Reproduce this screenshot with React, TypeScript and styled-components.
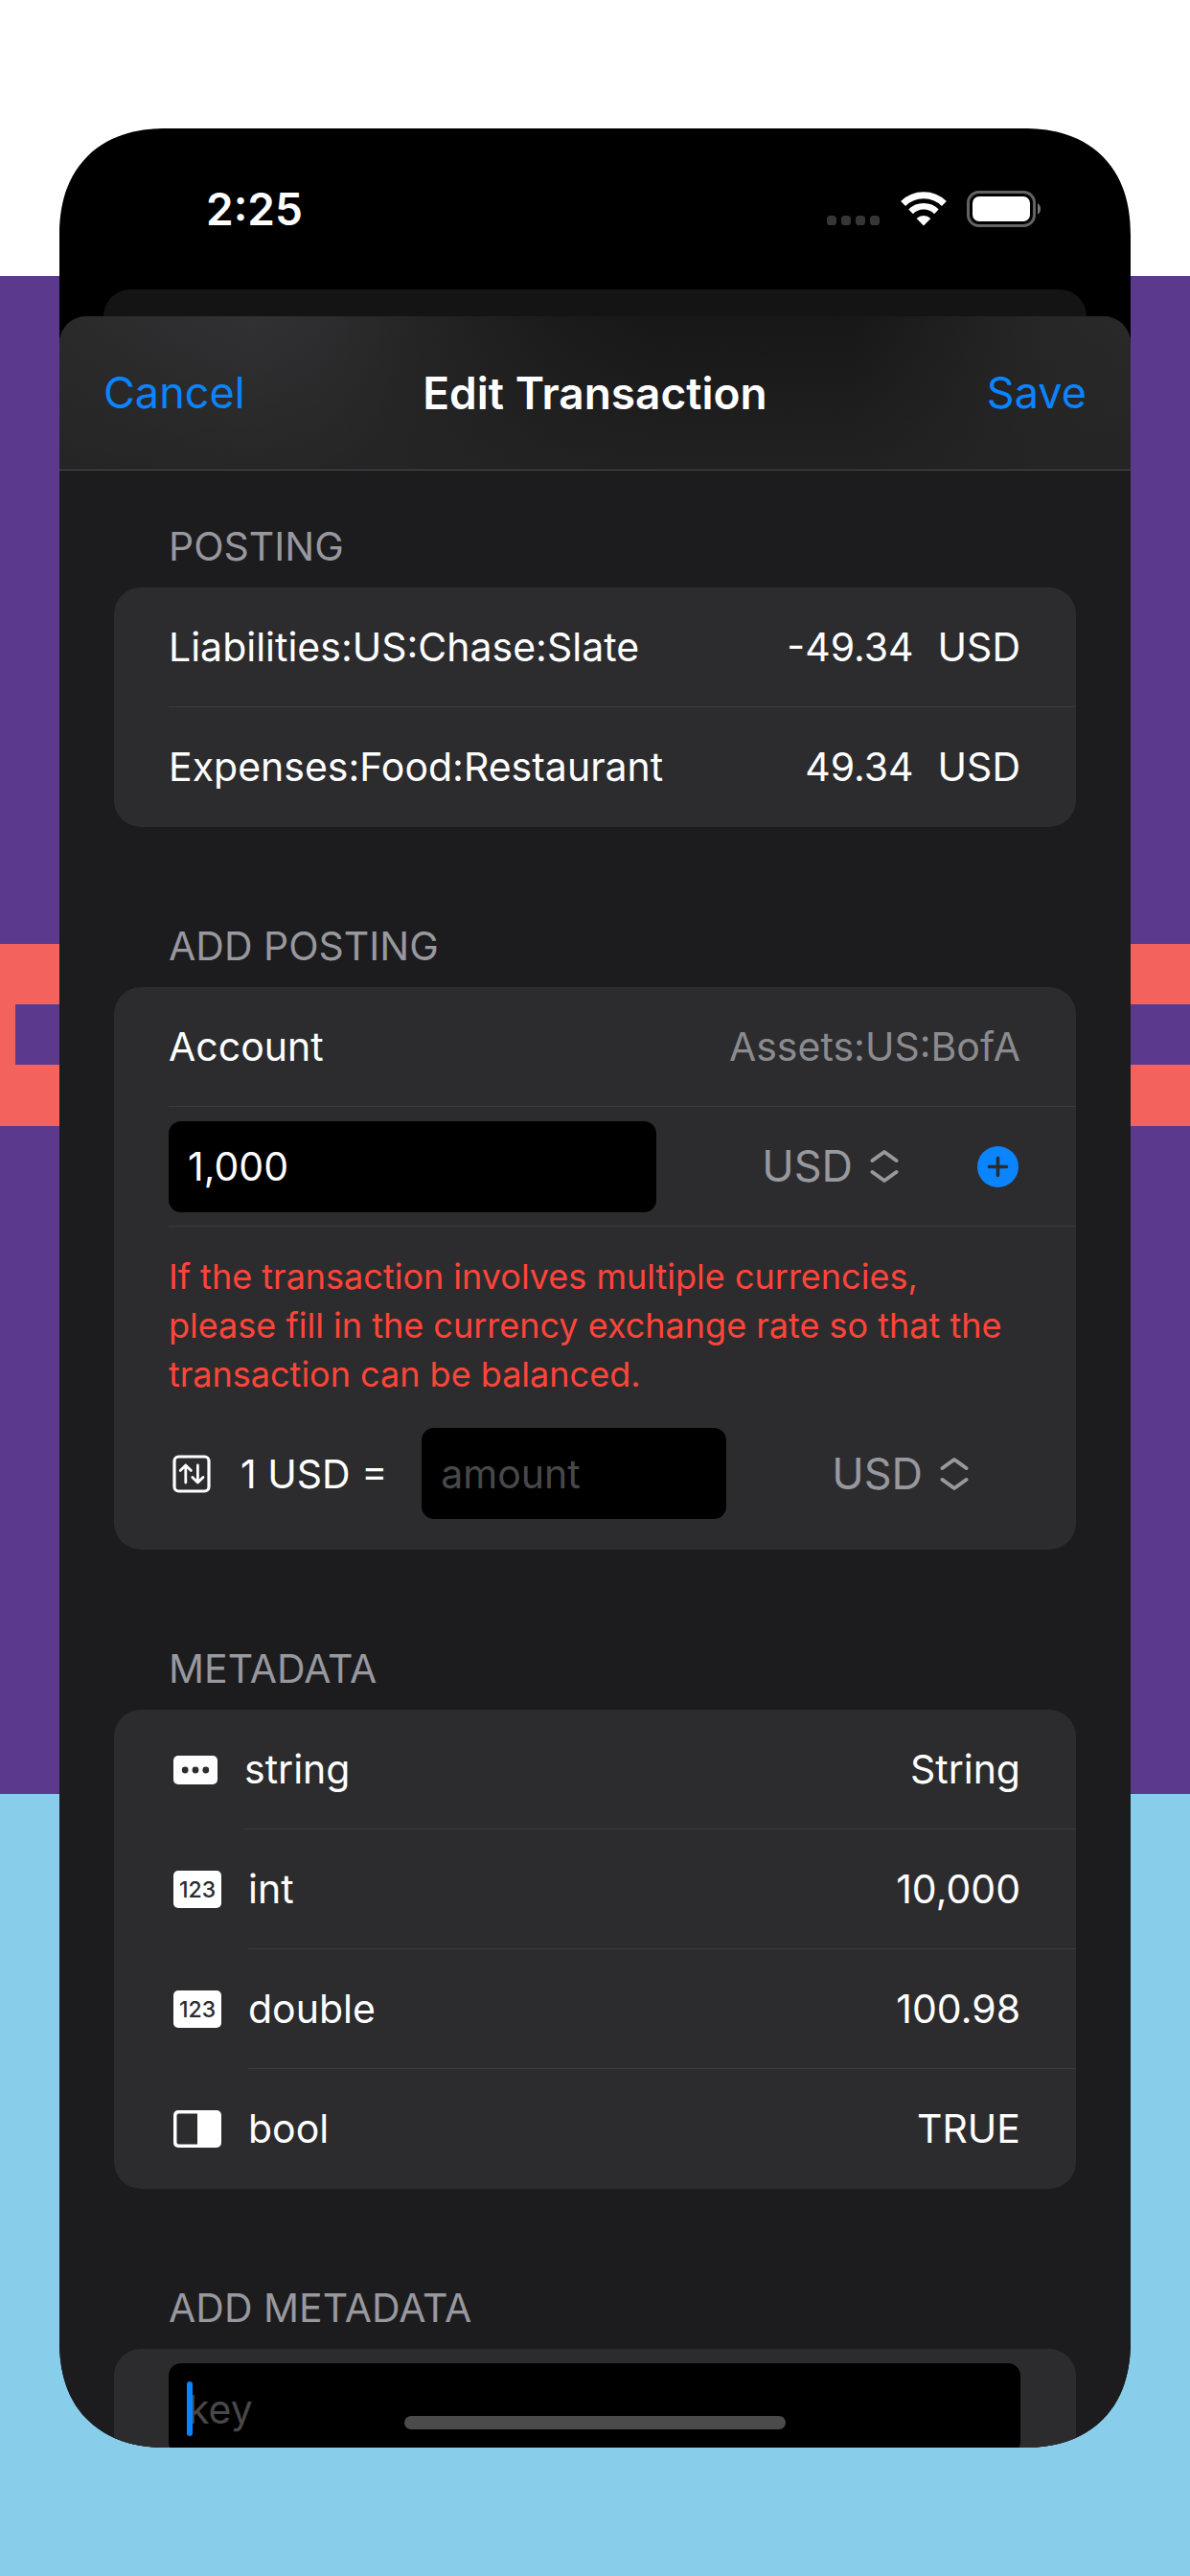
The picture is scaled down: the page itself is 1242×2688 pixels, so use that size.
import React, { useState } from "react";
import styled, { createGlobalStyle } from "styled-components";

const color = {
  purple: "#5b3a8e",
  coral: "#f3625d",
  sky: "#88cdea",
  sheet: "#1c1c1e",
  card: "#2c2c2e",
  line: "#3c3c3e",
  muted: "#98989f",
  hint: "#48484a",
  blue: "#0a84ff",
  red: "#ff453a",
};

const GlobalStyle = createGlobalStyle`
  *, *::before, *::after { box-sizing: border-box; }
  body { margin: 0; }
  body, button, input, select {
    font-family: Inter, "Liberation Sans", sans-serif;
    font-size: 41px;
    line-height: 52px;
    color: #fff;
  }
  button, input, select {
    border: 0;
    padding: 0;
    margin: 0;
    background: none;
    outline: none;
  }
  svg { display: block; flex: none; }
`;

const Page = styled.div`
  height: 100vh;
  min-height: 1200px;
  padding: 134px 62px;
  display: flex;
  background:
    linear-gradient(${color.coral}, ${color.coral}) 0 985px / 16px 190px no-repeat,
    linear-gradient(
      #fff 288px,
      ${color.purple} 288px 985px,
      ${color.coral} 985px 1048px,
      ${color.purple} 1048px 1111px,
      ${color.coral} 1111px 1175px,
      ${color.purple} 1175px 1872px,
      ${color.sky} 1872px
    );
`;

const Phone = styled.div`
  position: relative;
  flex: 1;
  min-width: 0;
  display: flex;
  flex-direction: column;
  overflow: hidden;
  border-radius: 112px;
  corner-shape: superellipse(1.2);
  background: #000;
`;

const StatusBar = styled.div`
  flex: none;
  height: 168px;
  padding: 0 93px 0 153px;
  display: flex;
  align-items: center;
  justify-content: space-between;
  font-size: 46px;
  font-weight: 600;
`;

const StatusIcons = styled.div`
  display: flex;
  align-items: center;
  gap: 21px;
`;

const SheetBehind = styled.div`
  flex: none;
  height: 28px;
  margin: 0 46px;
  border-radius: 28px 28px 0 0;
  background: #141414;
`;

const Sheet = styled.form`
  flex: 1;
  min-height: 0;
  display: flex;
  flex-direction: column;
  overflow: hidden;
  border-radius: 28px 28px 0 0;
  background: ${color.sheet};
`;

const NavBar = styled.header`
  flex: none;
  height: 161px;
  padding: 0 46px;
  display: grid;
  grid-template-columns: 1fr auto 1fr;
  align-items: center;
  border-bottom: 1px solid #4c4c4e;
  background:
    linear-gradient(transparent, rgba(36, 36, 36, 0.8)),
    linear-gradient(90deg, #2a2a2b, #313133 18%, #2e2e30 24%, #242424 34%, #1b1b1b 46%, #171717 56%, #171717 74%, #272727 92%, #292929);
`;

const Title = styled.h1`
  margin: 0;
  font-size: 46px;
  font-weight: 600;
`;

const NavButton = styled.button<{ $end?: boolean }>`
  justify-self: ${(p) => (p.$end ? "end" : "start")};
  font-size: 45px;
  color: ${color.blue};
`;

const Content = styled.main`
  flex: 1;
  min-height: 0;
  padding: 53px 57px 0;
  display: flex;
  flex-direction: column;
  gap: 98px;
  overflow: hidden;
`;

const Section = styled.section`
  flex: none;
`;

const SectionTitle = styled.h2`
  margin: 0;
  padding: 0 57px 17px;
  font-size: 41px;
  font-weight: 400;
  text-transform: uppercase;
  color: ${color.muted};
`;

const Card = styled.ul`
  margin: 0;
  padding: 0 0 0 57px;
  list-style: none;
  border-radius: 28px;
  background: ${color.card};
`;

const Row = styled.li`
  display: flex;
  align-items: center;
`;

const RowBody = styled.div`
  flex: 1;
  min-width: 0;
  height: 125px;
  padding-right: 58px;
  display: flex;
  align-items: center;
  justify-content: space-between;
  border-bottom: 1px solid ${color.line};

  ${Row}:last-child > & {
    border-bottom-color: transparent;
  }
`;

const Amount = styled.span`
  display: flex;
  gap: 25px;
`;

const IconSlot = styled.span`
  padding: 0 28px 0 5px;
`;

const AccountButton = styled.button`
  color: #8b8b8f;
`;

const Field = styled.input`
  flex: 1;
  width: 0;
  min-width: 0;
  height: 95px;
  padding: 0 20px;
  border-radius: 13px;
  background: #000;
  caret-color: ${color.blue};

  &::placeholder {
    color: ${color.hint};
    opacity: 1;
  }
`;

const PickerLabel = styled.label`
  margin-left: 110px;
  display: flex;
  align-items: center;
  gap: 18px;
`;

const PickerSelect = styled.select`
  appearance: none;
  field-sizing: content;
  font-size: 45px;
  color: ${color.muted};
`;

const RoundButton = styled.button`
  margin: 0 2px 0 82px;
  border-radius: 50%;
`;

const RateBlock = styled.div`
  flex: 1;
  padding: 27px 58px 32px 0;
`;

const Warning = styled.p`
  margin: 0 0 30px;
  font-size: 36px;
  line-height: 51px;
  color: ${color.red};
`;

const RateRow = styled.div`
  padding-right: 54px;
  display: flex;
  align-items: center;
`;

const SwapButton = styled.button`
  padding: 0 31px 0 4px;
`;

const RateLabel = styled.label`
  padding-right: 36px;
`;

const KeyRow = styled(Row)`
  position: relative;
  padding: 15px 58px 15px 0;
`;

const Caret = styled.span`
  position: absolute;
  left: 19px;
  top: 34px;
  width: 6px;
  height: 57px;
  border-radius: 3px;
  background: ${color.blue};
`;

const HomeIndicator = styled.div`
  position: absolute;
  bottom: 19px;
  left: 50%;
  width: 398px;
  height: 14px;
  margin-left: -199px;
  border-radius: 7px;
  background: #4b4b4b;
`;

const SignalDots = () => (
  <svg width="56" height="36" viewBox="0 0 56 36" fill="#363636" aria-hidden="true">
    {[0, 15, 30, 45].map((x) => (
      <rect key={x} x={x} y="25" width="10" height="10" rx="3.6" />
    ))}
  </svg>
);

const Wifi = () => (
  <svg width="48" height="36" viewBox="0 0 48 36" fill="none" stroke="#fff" aria-hidden="true">
    <path d="M2.6 12.6 A30.5 30.5 0 0 1 45.4 12.6" strokeWidth="7" />
    <path d="M10.6 20.8 A19 19 0 0 1 37.4 20.8" strokeWidth="6.6" />
    <path d="M24 35.5 L16.6 28 A10.6 10.6 0 0 1 31.4 28 Z" fill="#fff" stroke="none" />
  </svg>
);

const Battery = () => (
  <svg width="78" height="38" viewBox="0 0 78 38" aria-hidden="true">
    <rect x="1.5" y="1.5" width="69" height="35" rx="11" fill="none" stroke="#636363" strokeWidth="3" />
    <rect x="6" y="6" width="60" height="26" rx="7" fill="#fff" />
    <path d="M74 13 C78 15.5 78 22.5 74 25 Z" fill="#777" />
  </svg>
);

const UpDown = () => (
  <svg width="30" height="36" viewBox="0 0 30 36" fill="none" stroke={color.muted} strokeWidth="4" strokeLinecap="round" strokeLinejoin="round" aria-hidden="true">
    <path d="M2.5 12 L15 3 L27.5 12" />
    <path d="M2.5 24 L15 33 L27.5 24" />
  </svg>
);

const PlusCircle = () => (
  <svg width="43" height="43" viewBox="0 0 43 43" aria-hidden="true">
    <circle cx="21.5" cy="21.5" r="21.5" fill={color.blue} />
    <path d="M21.5 12.5 V30.5 M12.5 21.5 H30.5" stroke={color.card} strokeWidth="3.6" strokeLinecap="round" />
  </svg>
);

const SwapSquare = () => (
  <svg width="40" height="40" viewBox="0 0 40 40" fill="none" stroke="#fff" strokeWidth="2.8" strokeLinecap="round" strokeLinejoin="round" aria-hidden="true">
    <rect x="2" y="2" width="36" height="36" rx="4.5" strokeWidth="3.2" />
    <path d="M13.8 29 V11 M8.2 16.6 L13.8 11 L19.4 16.6" />
    <path d="M26.4 11 V29 M20.8 23.4 L26.4 29 L32 23.4" />
  </svg>
);

const TextIcon = () => (
  <svg width="46" height="30" viewBox="0 0 46 30" fill={color.card} aria-hidden="true">
    <rect width="46" height="30" rx="5" fill="#fff" />
    <circle cx="12.2" cy="15" r="3.4" />
    <circle cx="23" cy="15" r="3.4" />
    <circle cx="33.8" cy="15" r="3.4" />
  </svg>
);

const NumberBadge = styled.span`
  width: 50px;
  height: 39px;
  display: flex;
  align-items: center;
  justify-content: center;
  border-radius: 5px;
  background: #fff;
  color: ${color.card};
  font-size: 23px;
  line-height: 24px;
  font-weight: 500;
`;

const BoolIcon = () => (
  <svg width="50" height="39" viewBox="0 0 50 39" aria-hidden="true">
    <rect width="50" height="39" rx="5" fill="#fff" />
    <path d="M5.5 3.5 H25 V35.5 H5.5 Q3.5 35.5 3.5 33.5 V5.5 Q3.5 3.5 5.5 3.5 Z" fill={color.card} />
  </svg>
);

const CurrencyPicker = ({ name }: { name: string }) => (
  <PickerLabel>
    <PickerSelect aria-label={name} defaultValue="USD">
      <option>USD</option>
      <option>EUR</option>
      <option>JPY</option>
    </PickerSelect>
    <UpDown />
  </PickerLabel>
);

const postings = [
  { account: "Liabilities:US:Chase:Slate", amount: "-49.34", currency: "USD" },
  { account: "Expenses:Food:Restaurant", amount: "49.34", currency: "USD" },
];

const metadata = [
  { key: "string", value: "String", icon: <TextIcon /> },
  { key: "int", value: "10,000", icon: <NumberBadge>123</NumberBadge> },
  { key: "double", value: "100.98", icon: <NumberBadge>123</NumberBadge> },
  { key: "bool", value: "TRUE", icon: <BoolIcon /> },
];

export default function App() {
  const [amount, setAmount] = useState("1,000");

  return (
    <>
      <GlobalStyle />
      <Page>
        <Phone>
          <StatusBar>
            <span>2:25</span>
            <StatusIcons>
              <SignalDots />
              <Wifi />
              <Battery />
            </StatusIcons>
          </StatusBar>
          <SheetBehind />
          <Sheet onSubmit={(e) => e.preventDefault()}>
            <NavBar>
              <NavButton type="button">Cancel</NavButton>
              <Title>Edit Transaction</Title>
              <NavButton type="submit" $end>
                Save
              </NavButton>
            </NavBar>
            <Content>
              <Section>
                <SectionTitle>Posting</SectionTitle>
                <Card>
                  {postings.map((p) => (
                    <Row key={p.account}>
                      <RowBody>
                        <span>{p.account}</span>
                        <Amount>
                          <span>{p.amount}</span>
                          <span>{p.currency}</span>
                        </Amount>
                      </RowBody>
                    </Row>
                  ))}
                </Card>
              </Section>

              <Section>
                <SectionTitle>Add Posting</SectionTitle>
                <Card>
                  <Row>
                    <RowBody>
                      <span>Account</span>
                      <AccountButton type="button">Assets:US:BofA</AccountButton>
                    </RowBody>
                  </Row>
                  <Row>
                    <RowBody>
                      <Field aria-label="Amount" value={amount} onChange={(e) => setAmount(e.target.value)} />
                      <CurrencyPicker name="Currency" />
                      <RoundButton type="button" aria-label="Add posting">
                        <PlusCircle />
                      </RoundButton>
                    </RowBody>
                  </Row>
                  <Row>
                    <RateBlock>
                      <Warning>
                        If the transaction involves multiple currencies, please fill in the currency exchange rate so
                        that the transaction can be balanced.
                      </Warning>
                      <RateRow>
                        <SwapButton type="button" aria-label="Swap currencies">
                          <SwapSquare />
                        </SwapButton>
                        <RateLabel htmlFor="rate">1 USD =</RateLabel>
                        <Field id="rate" placeholder="amount" />
                        <CurrencyPicker name="Exchange currency" />
                      </RateRow>
                    </RateBlock>
                  </Row>
                </Card>
              </Section>

              <Section>
                <SectionTitle>Metadata</SectionTitle>
                <Card>
                  {metadata.map((m) => (
                    <Row key={m.key}>
                      <IconSlot>{m.icon}</IconSlot>
                      <RowBody>
                        <span>{m.key}</span>
                        <span>{m.value}</span>
                      </RowBody>
                    </Row>
                  ))}
                </Card>
              </Section>

              <Section>
                <SectionTitle>Add Metadata</SectionTitle>
                <Card>
                  <KeyRow>
                    <Field aria-label="Key" placeholder="key" />
                    <Caret />
                  </KeyRow>
                </Card>
              </Section>
            </Content>
          </Sheet>
          <HomeIndicator />
        </Phone>
      </Page>
    </>
  );
}
